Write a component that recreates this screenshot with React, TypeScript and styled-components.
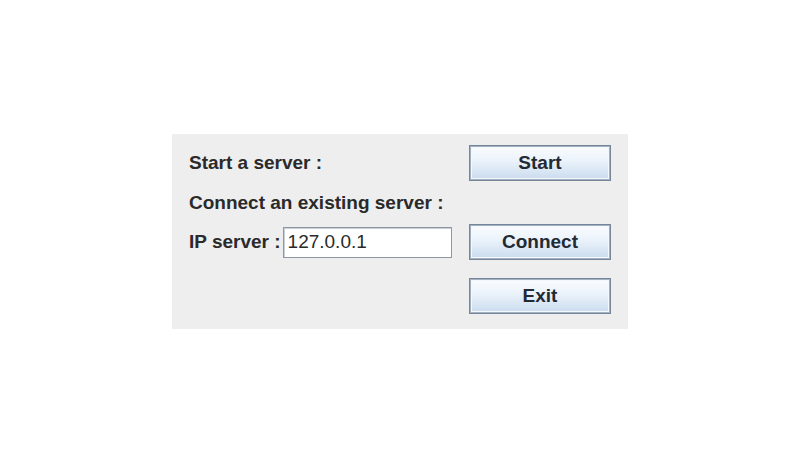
import React from "react";
import styled, { createGlobalStyle } from "styled-components";

const Global = createGlobalStyle`
  html, body { margin: 0; padding: 0; background: #ffffff; }
  body { font-family: "Liberation Sans", Arial, sans-serif; }
`;

const Page = styled.div`
  width: 800px;
  height: 463px;
  display: flex;
  justify-content: center;
  padding-top: 134px;
  box-sizing: border-box;
`;

const Panel = styled.div`
  width: 456px;
  height: 195px;
  box-sizing: border-box;
  background: #eeeeee;
  padding: 11px 17px 15px 17px;
  display: grid;
  grid-template-columns: 1fr 142px;
  grid-template-rows: 36px 43px 36px 54px;
  column-gap: 17px;
`;

const Label = styled.span`
  font-family: "Liberation Sans", Arial, sans-serif;
  font-weight: bold;
  font-size: 19px;
  color: #2a2a2a;
  white-space: nowrap;
  align-self: center;
`;

const WideLabel = styled(Label)`
  grid-column: 1 / span 2;
`;

const FieldRow = styled.div`
  display: flex;
  align-items: center;
  gap: 2px;
`;

const Field = styled.input`
  width: 169px;
  height: 31px;
  box-sizing: border-box;
  border: 1px solid #8d98a4;
  box-shadow: inset 1px 1px 0 #c9d0d7;
  background: #ffffff;
  font-family: "Liberation Sans", Arial, sans-serif;
  font-size: 19px;
  color: #2a2a2a;
  padding: 0 0 0 4px;
  margin: 0;
  outline: none;
`;

const Button = styled.button<{ $end?: boolean }>`
  grid-column: 2;
  align-self: ${(p) => (p.$end ? "end" : "center")};
  width: 142px;
  height: 36px;
  box-sizing: border-box;
  margin: 0;
  padding: 0;
  border: 1px solid #76869a;
  box-shadow: inset 0 0 0 1px #a3b1c0, inset 0 0 0 2px #f4f8fc;
  background: linear-gradient(to bottom, #fbfdff 0%, #eaf2fa 45%, #c9dbee 100%);
  font-family: "Liberation Sans", Arial, sans-serif;
  font-weight: bold;
  font-size: 19px;
  color: #222a33;
  cursor: pointer;
`;

const Spacer = styled.div``;

export default function App() {
  return (
    <>
      <Global />
      <Page>
        <Panel>
          <Label>Start a server :</Label>
          <Button>Start</Button>
          <WideLabel>Connect an existing server :</WideLabel>
          <FieldRow>
            <Label>IP server :</Label>
            <Field defaultValue="127.0.0.1" />
          </FieldRow>
          <Button>Connect</Button>
          <Spacer />
          <Button $end>Exit</Button>
        </Panel>
      </Page>
    </>
  );
}
